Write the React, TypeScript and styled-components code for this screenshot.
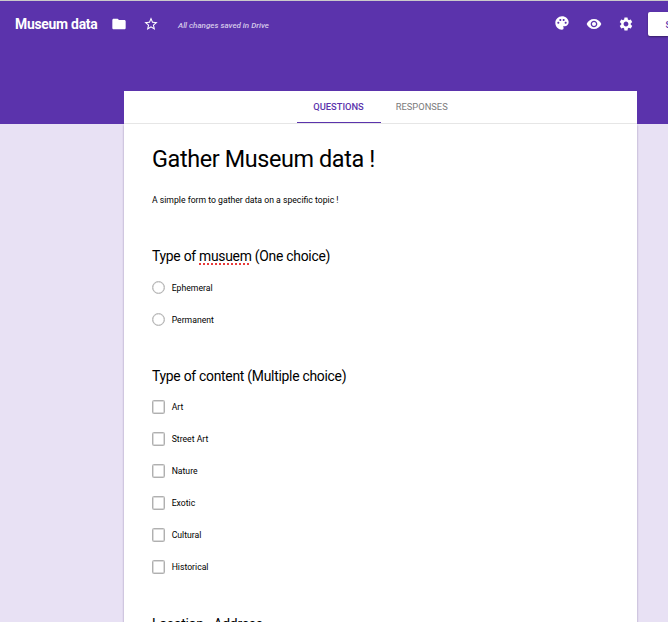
import React from "react";
import styled, { createGlobalStyle } from "styled-components";
import { MdFolder, MdPalette, MdSettings, MdStarBorder, MdVisibility } from "react-icons/md";

const GlobalStyle = createGlobalStyle`
  *, *::before, *::after { box-sizing: border-box; }
  html, body { margin: 0; height: 100%; overflow: hidden; }
  body { font-family: Roboto, "Liberation Sans", sans-serif; background: #e8e1f4; color: #000; }
`;

const Page = styled.div`
  height: 622px;
  overflow: hidden;
  border-top: 1px solid #cacaca;
  background: linear-gradient(#5b33ac 0 123px, #e8e1f4 123px);
`;

const TopBar = styled.header`
  display: flex;
  align-items: center;
  height: 46px;
  padding-left: 15px;
  color: #fff;
`;

const DocumentName = styled.div`
  width: 96px;
  font-size: 13.9px;
  font-weight: 700;
  letter-spacing: -0.25px;
  white-space: nowrap;
`;

const BarIcon = styled.span<{ $gap?: number; $lift?: number }>`
  display: flex;
  flex: none;
  margin-left: ${(p) => p.$gap ?? 0}px;
  margin-bottom: ${(p) => p.$lift ?? 0}px;
  svg { display: block; width: 16px; height: 16px; }
`;

const SaveStatus = styled.div`
  margin: 2px 0 0 19px;
  width: 110px;
  font-size: 8px;
  font-style: italic;
  font-weight: 500;
  white-space: nowrap;
  color: #d5c9ea;
`;

const Actions = styled.div`
  display: flex;
  align-items: center;
  gap: 16px;
  margin-left: auto;
  flex: none;
`;

const SendButton = styled.button`
  width: 20px;
  height: 24px;
  margin-left: -2px;
  padding: 0 0 0 17.5px;
  overflow: hidden;
  border: 0;
  border-radius: 2px 0 0 2px;
  background: #fff;
  box-shadow: 0 1px 2px rgba(0, 0, 0, 0.4);
  color: #5b33ac;
  font: 500 9.33px Roboto, sans-serif;
  text-align: left;
  white-space: nowrap;
`;

const Card = styled.main`
  width: 513px;
  height: 560px;
  margin: 44px 0 0 124px;
  background: #fff;
`;

const Tabs = styled.nav`
  display: flex;
  height: 33px;
  padding-left: 173px;
  border-bottom: 1px solid #e6e6e6;
`;

const Tab = styled.div<{ $active?: boolean }>`
  display: flex;
  justify-content: center;
  width: 84px;
  height: 32px;
  padding: 10px ${(p) => (p.$active ? 1 : 2.5)}px 0 0;
  border-bottom: 1px solid ${(p) => (p.$active ? "#5b33ac" : "transparent")};
  color: ${(p) => (p.$active ? "#5b33ac" : "#7b7b7b")};
  font-size: 9.33px;
  font-weight: ${(p) => (p.$active ? 500 : 400)};
  line-height: 12px;
  white-space: nowrap;
`;

const Form = styled.div`
  height: 527px;
  padding: 20px 28px 0;
  box-shadow: 0 1px 2px rgba(70, 50, 110, 0.45);
  clip-path: inset(0 -4px);
`;

const FormTitle = styled.h1`
  margin: 0;
  font-size: 23.4px;
  font-weight: 400;
  line-height: 30px;
  letter-spacing: -0.38px;
`;

const Description = styled.p`
  margin: 20px 0 0;
  font-size: 8.67px;
  line-height: 12px;
`;

const Question = styled.section<{ $top: number }>`
  margin-top: ${(p) => p.$top}px;
`;

const QuestionTitle = styled.h2`
  margin: 0 0 5px;
  font-size: 13.9px;
  font-weight: 400;
  line-height: 20px;
  letter-spacing: -0.27px;
  white-space: nowrap;
`;

const Misspelled = styled.span`
  text-decoration: underline dotted #e83a3a 1.5px;
  text-underline-offset: 2px;
  text-decoration-skip-ink: none;
`;

const Option = styled.div`
  display: flex;
  align-items: center;
  height: 32px;
  gap: 6.67px;
  font-size: 8.67px;
  line-height: 12px;
`;

const Radio = styled.span`
  width: 13px;
  height: 13px;
  border: 1px solid #b3b3b3;
  border-radius: 50%;
  box-shadow: inset 0 0 0 0.3px #b3b3b3;
`;

const RadioLabel = styled.span`
  padding-top: 2px;
`;

const Checkbox = styled.span`
  width: 13px;
  height: 14px;
  border: 1px solid #b0b0b0;
  border-radius: 1.5px;
  box-shadow: inset 0 0 0 0.5px #b8b8b8;
`;

const museumTypes = ["Ephemeral", "Permanent"];
const contentTypes = ["Art", "Street Art", "Nature", "Exotic", "Cultural", "Historical"];

export default function App() {
  return (
    <>
      <GlobalStyle />
      <Page>
        <TopBar>
          <DocumentName>Museum data</DocumentName>
          <BarIcon><MdFolder /></BarIcon>
          <BarIcon $gap={16}><MdStarBorder /></BarIcon>
          <SaveStatus>All changes saved in Drive</SaveStatus>
          <Actions>
            <BarIcon $lift={2}><MdPalette /></BarIcon>
            <BarIcon><MdVisibility /></BarIcon>
            <BarIcon><MdSettings /></BarIcon>
            <SendButton>SEND</SendButton>
          </Actions>
        </TopBar>
        <Card>
          <Tabs>
            <Tab $active>QUESTIONS</Tab>
            <Tab>RESPONSES</Tab>
          </Tabs>
          <Form>
            <FormTitle>Gather Museum data !</FormTitle>
            <Description>A simple form to gather data on a specific topic !</Description>
            <Question $top={40}>
              <QuestionTitle>Type of <Misspelled>musuem</Misspelled> (One choice)</QuestionTitle>
              {museumTypes.map((t) => <Option key={t}><Radio /><RadioLabel>{t}</RadioLabel></Option>)}
            </Question>
            <Question $top={31}>
              <QuestionTitle>Type of content (Multiple choice)</QuestionTitle>
              {contentTypes.map((t) => <Option key={t}><Checkbox />{t}</Option>)}
            </Question>
            <Question $top={31}>
              <QuestionTitle>Location - Address</QuestionTitle>
            </Question>
          </Form>
        </Card>
      </Page>
    </>
  );
}
